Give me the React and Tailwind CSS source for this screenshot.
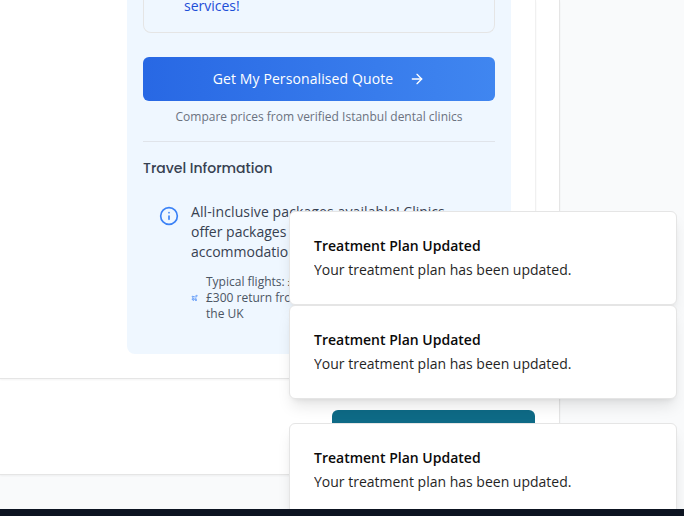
import { ArrowRight, Info, Plane } from "lucide-react";

function Toast({ className = "" }) {
  return (
    <div
      className={`flex h-[94px] w-[388px] shrink-0 flex-col justify-center gap-1 rounded-md border border-[#e5e5e5] bg-white px-6 text-sm leading-5 text-[#0a0a0a] shadow-lg ${className}`}
    >
      <div className="font-semibold">Treatment Plan Updated</div>
      <div className="opacity-90">Your treatment plan has been updated.</div>
    </div>
  );
}

function TravelInformation() {
  return (
    <section className="mt-4 border-t border-[#e0e4ea] pt-4">
      <h4 className="font-[Poppins,Inter,sans-serif] text-sm font-medium leading-5 text-[#374151]">
        Travel Information
      </h4>
      <div className="mt-2 flex gap-3 p-4">
        <Info className="mt-1 size-5 shrink-0 text-[#3b82f6]" />
        <div className="w-[272px] shrink-0">
          <p className="text-sm leading-5 text-[#374151]">
            <span className="font-medium tracking-[0.11px]">All-inclusive packages available!</span> Clinics
            <br />
            offer packages including
            <br />
            accommodation &amp; transfers.
          </p>
          <div className="mt-3 flex items-center gap-2 text-xs leading-4 text-[#4b5563]">
            <Plane className="h-3 w-[7px] shrink-0 text-[#3b82f6]" strokeWidth={2.5} />
            <span>
              Typical flights: £150-
              <br />
              £300 return from
              <br />
              the UK
            </span>
          </div>
        </div>
      </div>
    </section>
  );
}

function QuotePanel() {
  return (
    <div className="flex h-[354px] w-96 flex-col rounded-b-lg bg-[#eff7ff] px-4">
      <div className="flex h-[33px] shrink-0 items-end rounded-b-lg border border-t-0 border-[#e5e5e5] pb-4 pl-10 text-sm leading-5 text-[#1d4ed8]">
        services!
      </div>
      <button className="mt-6 flex h-11 shrink-0 items-center justify-center rounded-md bg-[linear-gradient(to_right,#2868e4,#4086f0)] text-sm font-medium tracking-[0.1px] text-white">
        Get My Personalised Quote
        <ArrowRight className="ml-4 size-4" />
      </button>
      <p className="mt-2 text-center text-xs leading-4 text-[#6b7280]">
        Compare prices from verified Istanbul dental clinics
      </p>
      <TravelInformation />
    </div>
  );
}

export default function App() {
  return (
    <div className="relative h-[516px] w-[684px] overflow-hidden bg-[#f9fafb] font-['Open_Sans',sans-serif]">
      <main className="h-[475px] w-[560px] border-r border-b border-[#e5e5e5] bg-white shadow-xs">
        <div className="flex h-[379px] w-[536px] items-start justify-end border-r border-b border-r-[#f0f0f0] border-b-[#e5e5e5] pr-6 shadow-xs">
          <QuotePanel />
        </div>
        <div className="flex w-[535px] justify-end pt-[31px]">
          <div className="h-10 w-[203px] rounded-md bg-[#0e6a86]" />
        </div>
      </main>
      <div className="absolute top-[211px] left-[289px] flex flex-col">
        <Toast />
        <Toast />
        <Toast className="mt-6" />
      </div>
      <footer className="absolute inset-x-0 bottom-0 h-[7px] bg-[#0d1421]" />
    </div>
  );
}
